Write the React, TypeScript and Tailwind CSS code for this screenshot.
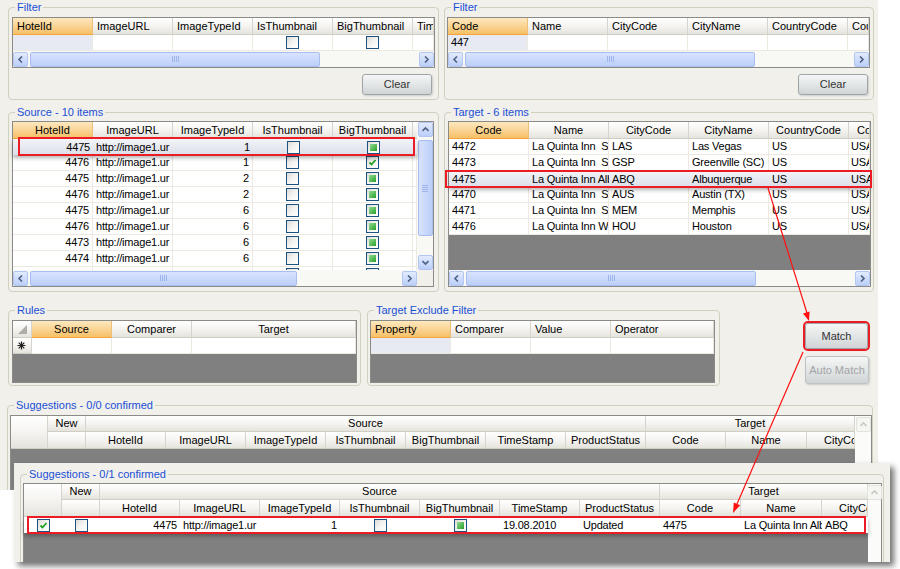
import clsx from 'clsx'
import type { ReactNode } from 'react'

const HEAD = 'border-r border-b border-r-[#d6d5cd] border-b-[#cfcdc4] bg-linear-to-b from-white via-[#f5f4f1] to-[#e4e3dc]'
const HOT = 'border-r border-b border-r-[#efbf78] border-b-[#f3a53a] bg-linear-to-b from-[#fde8be] to-[#f6c066]'
const GRID = 'border border-[#8a8a86]'
const FORM = 'bg-[#f1f0ea]'

type Al = 'l' | 'c' | 'r'
type Cell = { w: string; t?: ReactNode; al?: Al; bg?: string; pad?: string }

function justify(al: Al = 'l') {
  return al === 'r' ? 'justify-end' : al === 'c' ? 'justify-center' : 'justify-start'
}

function HCell({ w, children, hot, al = 'c', h = 'h-[17px]', className }: { w: string; children?: ReactNode; hot?: boolean; al?: Al; h?: string; className?: string }) {
  return (
    <div className={clsx('flex shrink-0 items-center overflow-hidden whitespace-nowrap px-[4px] text-[11px] leading-none text-black', w, h, hot ? HOT : HEAD, justify(al), className)}>
      {children}
    </div>
  )
}

function DataRow({ cells, plain }: { cells: Cell[]; plain?: boolean }) {
  return (
    <div className="flex">
      {cells.map((c, i) => (
        <div
          key={i}
          className={clsx(
            'flex h-[16px] shrink-0 items-center overflow-hidden whitespace-pre text-[11px] leading-none tracking-[-0.2px] text-black',
            c.pad ?? 'px-[3px]',
            c.w,
            justify(c.al),
            !plain && 'border-r border-b border-[#ece9e0]',
            !plain && (c.bg ?? 'bg-white')
          )}
        >
          {c.t}
        </div>
      ))}
    </div>
  )
}

function Lifted({ cells, box, bg = 'bg-linear-to-b from-[#f3f4f8] to-[#dcdfe9]' }: { cells: Cell[]; box: string; bg?: string }) {
  return (
    <div className={clsx('relative z-10 shadow-[0_3px_4px_rgba(0,0,0,0.3)]', bg)}>
      <DataRow cells={cells} plain />
      <div className={clsx('pointer-events-none absolute border-2 border-[#ec1c24]', box)} />
    </div>
  )
}

function Check({ v }: { v: 0 | 1 | 2 }) {
  return (
    <span className="flex h-[13px] w-[13px] items-center justify-center border border-[#1c5180] bg-linear-to-br from-[#dcdbd5] via-[#f4f4f2] to-white">
      {v === 1 && <span className="h-[7px] w-[7px] bg-linear-to-br from-[#8fdc8f] to-[#22a022]" />}
      {v === 2 && (
        <svg width="9" height="9" viewBox="0 0 9 9">
          <path d="M1.5 4.5 L3.5 6.5 L7.5 2" fill="none" stroke="#21a121" strokeWidth="1.8" />
        </svg>
      )}
    </span>
  )
}

const ARROWS: Record<string, string> = {
  l: 'M5 0.5 L2 3.5 L5 6.5',
  r: 'M2 0.5 L5 3.5 L2 6.5',
  u: 'M0.5 5 L3.5 2 L6.5 5',
  d: 'M0.5 2 L3.5 5 L6.5 2',
}

function ScrollBtn({ dir, off }: { dir: 'l' | 'r' | 'u' | 'd'; off?: boolean }) {
  return (
    <span
      className={clsx(
        'flex h-[15px] w-[15px] shrink-0 items-center justify-center rounded-[2px] border',
        off ? 'border-[#e3e3dd] bg-[#f5f5f1]' : 'border-[#b3c6f2] bg-linear-to-b from-[#e3ebfe] to-[#bccff9]'
      )}
    >
      <svg width="7" height="7" viewBox="0 0 7 7">
        <path d={ARROWS[dir]} fill="none" stroke={off ? '#c9c9c2' : '#4d6185'} strokeWidth="1.6" />
      </svg>
    </span>
  )
}

function Grip({ vertical }: { vertical?: boolean }) {
  return (
    <span className={clsx('flex gap-[1px]', vertical && 'flex-col')}>
      {[0, 1, 2, 3].map((i) => (
        <span key={i} className={clsx('bg-[#9fb4ea]', vertical ? 'h-[1px] w-[6px]' : 'h-[6px] w-[1px]')} />
      ))}
    </span>
  )
}

function HScroll({ w, thumb }: { w: string; thumb: string }) {
  return (
    <div className={clsx('flex h-[16px] shrink-0 items-center bg-[#f8f8f5]', w)}>
      <ScrollBtn dir="l" />
      <div className="flex h-full flex-1 items-center">
        <div className={clsx('flex h-[15px] items-center justify-center rounded-[2px] border border-[#a9bdf0] bg-linear-to-b from-[#d8e3fe] to-[#bccff9]', thumb)}>
          <Grip />
        </div>
      </div>
      <ScrollBtn dir="r" />
    </div>
  )
}

function GroupBox({ title, className, inner, children }: { title: string; className: string; inner: string; children: ReactNode }) {
  return (
    <fieldset className={clsx('shrink-0 rounded-[4px] border border-[#d0d0bf]', className)}>
      <legend className="ml-[6px] px-[2px] text-[11px] leading-[13px] text-[#1a4fd6]">{title}</legend>
      <div className={inner}>{children}</div>
    </fieldset>
  )
}

function WinButton({ children, className, off }: { children: ReactNode; className: string; off?: boolean }) {
  return (
    <button
      className={clsx(
        'flex items-center justify-center rounded-[3px] border bg-linear-to-b from-[#f5f6f6] via-[#e3e6e6] to-[#d0d4d5] text-[11px] shadow-[1px_1px_2px_rgba(0,0,0,0.15)]',
        off ? 'border-[#bcc2c4] text-[#a2a4a6]' : 'border-[#9ea6aa] text-[#333]',
        className
      )}
    >
      {children}
    </button>
  )
}

const w80 = 'w-[80px]'

function FilterGrid({ cols, first, checks }: { cols: string[]; first: ReactNode; checks?: boolean }) {
  return (
    <div className={clsx('w-[423px] bg-white', GRID)}>
      <div className="flex">
        {cols.map((c, i) => (
          <HCell key={c} w={i === 5 ? 'w-[21px]' : w80} hot={i === 0} al="l">
            {c}
          </HCell>
        ))}
      </div>
      <DataRow
        cells={[
          { w: w80, t: first, bg: 'bg-[#e7e9f3]' },
          { w: w80 },
          { w: w80 },
          { w: w80, t: checks ? <Check v={0} /> : null, al: 'c' },
          { w: w80, t: checks ? <Check v={0} /> : null, al: 'c' },
          { w: 'w-[21px]' },
        ]}
      />
      <HScroll w="w-full" thumb="ml-[2px] w-[290px]" />
    </div>
  )
}

const srcData: [string, string, 1 | 2][] = [
  ['4475', '1', 1],
  ['4476', '1', 2],
  ['4475', '2', 1],
  ['4476', '2', 1],
  ['4475', '6', 1],
  ['4476', '6', 1],
  ['4473', '6', 1],
  ['4474', '6', 1],
  ['4474', '6', 1],
]

function srcCells([id, type, big]: [string, string, 1 | 2]): Cell[] {
  return [
    { w: w80, t: id, al: 'r' },
    { w: w80, t: 'http://image1.ur' },
    { w: w80, t: type, al: 'r' },
    { w: w80, t: <Check v={0} />, al: 'c' },
    { w: w80, t: <Check v={big} />, al: 'c' },
    { w: 'w-[4px]', pad: 'px-0' },
  ]
}

function SourceGrid() {
  return (
    <div className={clsx('w-[422px] bg-white', GRID)}>
      <div className="flex">
        <div className="w-[404px]">
          <div className="flex">
            {['HotelId', 'ImageURL', 'ImageTypeId', 'IsThumbnail', 'BigThumbnail'].map((c, i) => (
              <HCell key={c} w={w80} hot={i === 0}>
                {c}
              </HCell>
            ))}
            <HCell w="w-[4px]" className="px-0" />
          </div>
          {srcData.slice(0, 8).map((r, i) =>
            i === 0 ? (
              <Lifted key={i} cells={srcCells(r)} box="-top-[2px] -bottom-[1px] left-[5px] right-[2px]" />
            ) : (
              <DataRow key={i} cells={srcCells(r)} />
            )
          )}
          <div className="h-[3px] overflow-hidden">
            <DataRow cells={srcCells(srcData[8])} />
          </div>
        </div>
        <div className="flex h-[148px] w-[16px] flex-col items-center bg-[#f8f8f5]">
          <ScrollBtn dir="u" />
          <div className="flex w-full flex-1 flex-col items-center">
            <div className="mt-[3px] flex h-[96px] w-[15px] items-center justify-center rounded-[2px] border border-[#a9bdf0] bg-linear-to-r from-[#d8e3fe] to-[#bccff9]">
              <Grip vertical />
            </div>
          </div>
          <ScrollBtn dir="d" />
        </div>
      </div>
      <div className="flex">
        <HScroll w="w-[404px]" thumb="ml-[2px] w-[267px]" />
        <div className={clsx('h-[16px] w-[16px]', FORM)} />
      </div>
    </div>
  )
}

const tgtData = [
  ['4472', 'La Quinta Inn  Su', 'LAS', 'Las Vegas', 'US', 'USA'],
  ['4473', 'La Quinta Inn  Su', 'GSP', 'Greenville (SC)', 'US', 'USA'],
  ['4475', 'La Quinta Inn Alb', 'ABQ', 'Albuquerque', 'US', 'USA'],
  ['4470', 'La Quinta Inn  Su', 'AUS', 'Austin (TX)', 'US', 'USA'],
  ['4471', 'La Quinta Inn  Su', 'MEM', 'Memphis', 'US', 'USA'],
  ['4476', 'La Quinta Inn Wi', 'HOU', 'Houston', 'US', 'USA'],
]

function tgtCells(r: string[]): Cell[] {
  return r.map((t, i) => (i === 5 ? { w: 'w-[21px]', t, pad: 'pl-[2px]' } : { w: w80, t }))
}

function TargetGrid() {
  return (
    <div className={clsx('w-[423px] bg-white', GRID)}>
      <div className="flex">
        {['Code', 'Name', 'CityCode', 'CityName', 'CountryCode'].map((c, i) => (
          <HCell key={c} w={w80} hot={i === 0}>
            {c}
          </HCell>
        ))}
        <HCell w="w-[21px]" al="l" className="pl-[8px]">
          Co
        </HCell>
      </div>
      {tgtData.map((r, i) =>
        i === 2 ? (
          <Lifted key={i} cells={tgtCells(r)} box="-top-[1px] -bottom-[1px] -left-[4px] -right-[2px]" />
        ) : (
          <DataRow key={i} cells={tgtCells(r)} />
        )
      )}
      <div className="h-[35px] bg-[#808080]" />
      <HScroll w="w-full" thumb="ml-[2px] w-[290px]" />
    </div>
  )
}

function Asterisk() {
  return (
    <svg width="9" height="9" viewBox="0 0 9 9" stroke="#222" strokeWidth="1.2">
      <path d="M4.5 0.5 V8.5 M0.5 4.5 H8.5 M1.7 1.7 L7.3 7.3 M7.3 1.7 L1.7 7.3" />
    </svg>
  )
}

function RulesGrid() {
  return (
    <div className={clsx('w-[345px] bg-[#808080]', GRID)}>
      <div className="flex">
        <HCell w="w-[19px]" className="items-end justify-end px-[2px] pb-[3px]">
          <svg width="9" height="9" viewBox="0 0 9 9">
            <polygon points="9,0 9,9 0,9" fill="#aeada6" />
          </svg>
        </HCell>
        <HCell w={w80} hot>
          Source
        </HCell>
        <HCell w={w80}>Comparer</HCell>
        <HCell w="w-[164px]">Target</HCell>
      </div>
      <div className="flex">
        <HCell w="w-[19px]" h="h-[16px]" al="l" className="px-[3px]">
          <Asterisk />
        </HCell>
        <DataRow cells={[{ w: w80 }, { w: w80 }, { w: 'w-[164px]' }]} />
      </div>
      <div className="h-[28px]" />
    </div>
  )
}

function ExcludeGrid() {
  return (
    <div className={clsx('w-[345px] bg-[#808080]', GRID)}>
      <div className="flex">
        <HCell w={w80} hot al="l">
          Property
        </HCell>
        <HCell w={w80} al="l">
          Comparer
        </HCell>
        <HCell w={w80} al="l">
          Value
        </HCell>
        <HCell w="w-[103px]" al="l">
          Operator
        </HCell>
      </div>
      <DataRow cells={[{ w: w80, bg: 'bg-[#e7e9f3]' }, { w: w80 }, { w: w80 }, { w: 'w-[103px]' }]} />
      <div className="h-[28px]" />
    </div>
  )
}

const sugSrc = ['HotelId', 'ImageURL', 'ImageTypeId', 'IsThumbnail', 'BigThumbnail', 'TimeStamp', 'ProductStatus']

function SugHead({ rh, code, city }: { rh: string; code: string; city: string }) {
  return (
    <div className="flex">
      <HCell w={rh} h="h-[33px]" />
      <div className="w-[38px] shrink-0">
        <HCell w="w-[38px]" h="h-[16px]">
          New
        </HCell>
        <HCell w="w-[38px]" />
      </div>
      <div className="w-[560px] shrink-0">
        <HCell w="w-[560px]" h="h-[16px]">
          Source
        </HCell>
        <div className="flex">
          {sugSrc.map((s) => (
            <HCell key={s} w={w80}>
              {s}
            </HCell>
          ))}
        </div>
      </div>
      <div className="shrink-0">
        <HCell w="w-full" h="h-[16px]">
          Target
        </HCell>
        <div className="flex">
          <HCell w={code}>Code</HCell>
          <HCell w="w-[81px]">Name</HCell>
          <HCell w={city} al="l" className="pl-[17px]">
            CityCo
          </HCell>
        </div>
      </div>
    </div>
  )
}

function SugVScroll({ w }: { w: string }) {
  return (
    <div className={clsx('flex shrink-0 flex-col items-center bg-[#fbfbf9] pt-[1px]', w)}>
      <ScrollBtn dir="u" off />
    </div>
  )
}

function Overlay() {
  const cells: Cell[] = [
    { w: 'w-[38px]', t: <Check v={2} />, al: 'c' },
    { w: 'w-[38px]', t: <Check v={0} />, al: 'c' },
    { w: w80, t: '4475', al: 'r' },
    { w: w80, t: 'http://image1.ur' },
    { w: w80, t: '1', al: 'r' },
    { w: w80, t: <Check v={0} />, al: 'c' },
    { w: w80, t: <Check v={1} />, al: 'c' },
    { w: w80, t: '19.08.2010' },
    { w: w80, t: 'Updated' },
    { w: 'w-[81px]', t: '4475' },
    { w: 'w-[81px]', t: 'La Quinta Inn Alb' },
    { w: 'w-[46px]', t: 'ABQ' },
  ]
  return (
    <div className={clsx('absolute left-[14px] top-[463px] z-20 h-[99px] w-[876px] overflow-hidden pl-[6px] pt-[5px] shadow-[4px_4px_6px_rgba(0,0,0,0.55)]', FORM)}>
      <GroupBox title="Suggestions - 0/1 confirmed" className="h-[100px] w-[864px]" inner="pl-[2px] pt-[2px]">
        <div className={clsx('flex w-[859px] bg-[#808080]', GRID)}>
          <div className="w-[844px]">
            <SugHead rh="w-[38px]" code="w-[81px]" city="w-[46px]" />
            <Lifted cells={cells} bg="bg-white" box="-top-[1px] -bottom-[1px] left-[3px] right-[2px]" />
            <div className="h-[30px]" />
          </div>
          <SugVScroll w="w-[13px]" />
        </div>
      </GroupBox>
    </div>
  )
}

export default function App() {
  return (
    <div className="relative h-[569px] w-[900px] overflow-hidden bg-white font-['Liberation_Sans',Arial,sans-serif]">
      <div className={clsx('h-[490px] w-[878px] overflow-hidden pl-[8px] pt-[1px]', FORM)}>
        <div className="flex gap-[5px]">
          <GroupBox title="Filter" className="h-[99px] w-[431px]" inner="pl-[3px] pt-[3px]">
            <FilterGrid cols={['HotelId', 'ImageURL', 'ImageTypeId', 'IsThumbnail', 'BigThumbnail', 'Tim']} first={null} checks />
            <div className="mt-[6px] flex justify-end pr-[6px]">
              <WinButton className="h-[21px] w-[70px]">Clear</WinButton>
            </div>
          </GroupBox>
          <GroupBox title="Filter" className="h-[99px] w-[430px]" inner="pl-[2px] pt-[3px]">
            <FilterGrid cols={['Code', 'Name', 'CityCode', 'CityName', 'CountryCode', 'Cou']} first="447" />
            <div className="mt-[6px] flex justify-end pr-[5px]">
              <WinButton className="h-[21px] w-[70px]">Clear</WinButton>
            </div>
          </GroupBox>
        </div>

        <div className="mt-[6px] flex gap-[5px]">
          <GroupBox title="Source - 10 items" className="h-[186px] w-[431px]" inner="pl-[3px] pt-[2px]">
            <SourceGrid />
          </GroupBox>
          <GroupBox title="Target - 6 items" className="h-[186px] w-[430px]" inner="pl-[3px] pt-[2px]">
            <TargetGrid />
          </GroupBox>
        </div>

        <div className="mt-[12px] flex">
          <GroupBox title="Rules" className="h-[82px] w-[353px]" inner="pl-[3px] pt-[3px]">
            <RulesGrid />
          </GroupBox>
          <GroupBox title="Target Exclude Filter" className="ml-[6px] h-[82px] w-[353px]" inner="pl-[2px] pt-[3px]">
            <ExcludeGrid />
          </GroupBox>
          <div className="ml-[85px] flex flex-col pt-[19px]">
            <WinButton className="h-[26px] w-[63px] ring-2 ring-[#ec1c24]">Match</WinButton>
            <WinButton off className="mt-[7px] h-[28px] w-[64px]">
              Auto Match
            </WinButton>
          </div>
        </div>

        <div className="-ml-[1px] mt-[13px]">
          <GroupBox title="Suggestions - 0/0 confirmed" className="h-[100px] w-[866px]" inner="pl-[2px] pt-[3px]">
            <div className={clsx('flex w-[862px] bg-[#808080]', GRID)}>
              <div className="w-[844px]">
                <SugHead rh="w-[37px]" code="w-[80px]" city="w-[48px]" />
                <div className="h-[40px]" />
              </div>
              <SugVScroll w="w-[16px]" />
            </div>
          </GroupBox>
        </div>
      </div>

      <Overlay />

      <svg className="pointer-events-none absolute inset-0 z-30" width="900" height="569" viewBox="0 0 900 569">
        <path d="M768 188 L807 313" stroke="#ff1010" strokeWidth="1.2" fill="none" />
        <polygon points="809,321 803,313.5 809.6,311.4" fill="#ff1010" />
        <path d="M803 352 L737 504" stroke="#ff1010" strokeWidth="1.2" fill="none" />
        <polygon points="733,513 740.2,505.2 733.8,502.4" fill="#ff1010" />
      </svg>
    </div>
  )
}
